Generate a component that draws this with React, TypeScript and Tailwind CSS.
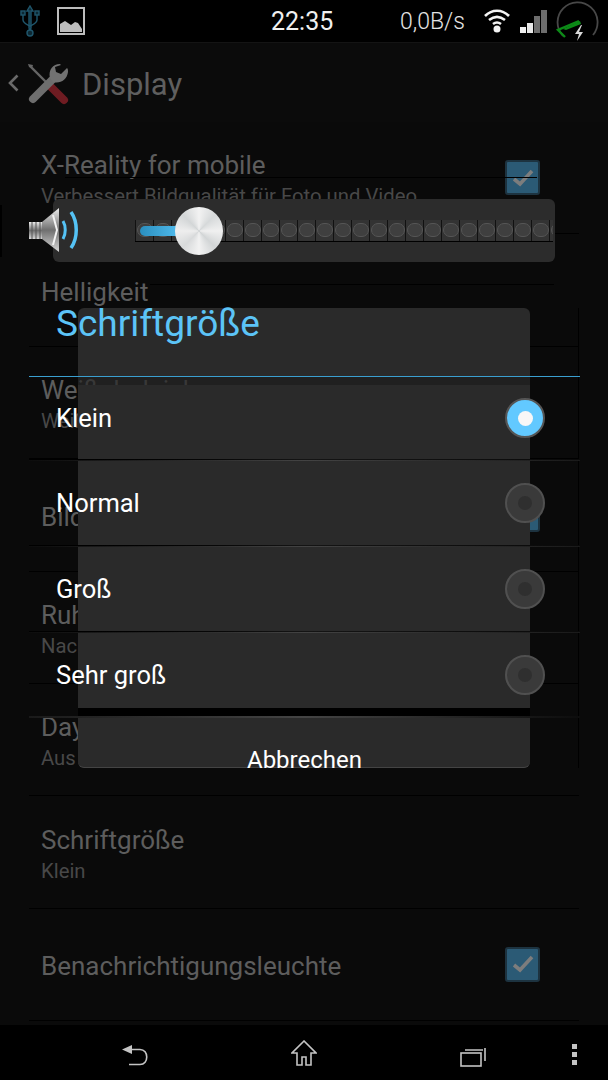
const rows = [
  { title: "X-Reality for mobile", sub: "Verbessert Bildqualität für Foto und Video", check: true },
  { title: "Helligkeit" },
  { title: "Weißabgleich", sub: "Weiß" },
  { title: "Bildschirm drehen", check: true },
  { title: "Ruhezustand", sub: "Nach 2 Minuten Inaktivität" },
  { title: "Daydream", sub: "Aus" },
  { title: "Schriftgröße", sub: "Klein" },
  { title: "Benachrichtigungsleuchte", check: true },
];

const options = ["Klein", "Normal", "Groß", "Sehr groß"];
const cells = Array.from({ length: 24 }, (_, i) => i);

function Checkbox() {
  return (
    <div className="flex h-[35px] w-[35px] items-center justify-center rounded-[3px] border-2 border-[#1d3340] bg-[#2b5a75]">
      <svg width="24" height="24" viewBox="0 0 24 24" fill="none" stroke="#7d7d7d" strokeWidth="3.6">
        <path d="M3 13l6 5L21 5" />
      </svg>
    </div>
  );
}

function Radio({ on }: { on: boolean }) {
  if (on) {
    return (
      <div className="flex h-[40px] w-[40px] items-center justify-center rounded-full border-2 border-[#555555] bg-[#62c9ff]">
        <div className="h-[15px] w-[15px] rounded-full bg-[#f7f7f7]" />
      </div>
    );
  }
  return (
    <div className="flex h-[40px] w-[40px] items-center justify-center rounded-full border-2 border-[#505050] bg-[#3a3a3a]">
      <div className="h-[14px] w-[14px] rounded-full bg-[#2f2f2f]" />
    </div>
  );
}

function Divider() {
  return (
    <div>
      <div className="h-px bg-gradient-to-r from-black via-[#141414] to-[#0a0a0a]" />
      <div className="h-px bg-gradient-to-r from-[#0d0d0d] via-[#434343] to-[#1a1a1a]" />
    </div>
  );
}

function StatusBar() {
  return (
    <div className="flex h-[42px] items-center bg-black text-[#f0f0f0]">
      {/* usb */}
      <svg className="ml-[20px]" width="20" height="32" viewBox="0 0 20 32" fill="none" stroke="#1f566c" strokeWidth="1.4">
        <path d="M10 1l3 5h-2v17l-1 3-1-3V6H7z" fill="#0d2833" />
        <path d="M3 9v6c0 3 3 4 7 6 4-2 7-3 7-6V9" />
        <rect x="1" y="6" width="4" height="4" fill="#0d2833" />
        <rect x="15" y="6" width="4" height="4" fill="#0d2833" />
        <circle cx="10" cy="28" r="3" fill="#0d2833" />
      </svg>
      {/* picture */}
      <svg className="ml-[17px]" width="28" height="28" viewBox="0 0 28 28">
        <rect x="1" y="1" width="26" height="26" fill="none" stroke="#bdbdbd" strokeWidth="2" />
        <path d="M3 25V17l5-3 3 2 3 2 4-3 3 1 4 6v3z" fill="#bdbdbd" />
      </svg>
      <span className="ml-[186px] w-[66px] text-[25px] leading-none">22:35</span>
      <span className="ml-[63px] w-[66px] text-[23px] leading-none font-light text-[#e4e4e4]">0,0B/s</span>
      {/* wifi */}
      <svg className="ml-[18px]" width="26" height="26" viewBox="0 0 26 26" fill="none" stroke="#f4f4f4" strokeWidth="2.6">
        <path d="M1 8c7-7 17-7 24 0" />
        <path d="M5 12c5-4 11-4 16 0" />
        <path d="M9 16c2.600-2 5.400-2 8 0" />
        <circle cx="13" cy="21" r="3.500" fill="#f4f4f4" stroke="none" />
      </svg>
      {/* signal */}
      <div className="ml-[10px] flex h-[23px] items-end gap-[1px]">
        <div className="h-[6px] w-[6px] bg-[#f0f0f0]" />
        <div className="h-[10px] w-[6px] bg-[#e8e8e8]" />
        <div className="h-[17px] w-[6px] bg-[#6d6d6d]" />
        <div className="h-[23px] w-[6px] bg-[#6d6d6d]" />
      </div>
      {/* gauge */}
      <svg className="ml-[8px]" width="44" height="42" viewBox="0 0 44 42" fill="none">
        <path d="M8 36A20 20 0 1 1 38 35" stroke="#484848" strokeWidth="1.800" />
        <path d="M10 37l-7-7 21-9" stroke="#0c8a17" strokeWidth="2.400" />
        <path d="M8 29l17-8 1 3-15 6z" fill="#0c8a17" />
        <path d="M26 25l-6 9h4l-2 7 6-9h-4l3-7z" fill="#d8d8d8" />
      </svg>
    </div>
  );
}

function ActionBar() {
  return (
    <div className="flex h-[80px] items-center border-t border-[#141414] bg-[#0b0b0b]">
      <svg className="ml-[8px]" width="11" height="18" viewBox="0 0 11 18" fill="none" stroke="#6a6a6a" strokeWidth="2.600">
        <path d="M9.500 1.500L2 9l7.500 7.500" />
      </svg>
      {/* wrench and screwdriver */}
      <svg className="ml-[8px] mt-[2px]" width="42" height="42" viewBox="0 0 42 42" fill="none">
        <path d="M3 3l20 20" stroke="#666666" strokeWidth="2.400" />
        <path d="M1 1l5 1-1 3-3-1z" fill="#666666" />
        <path d="M24 24l13 13" stroke="#6f1c22" strokeWidth="8" strokeLinecap="round" />
        <path d="M6 36L25 17" stroke="#6e6e6e" strokeWidth="8" strokeLinecap="round" />
        <path d="M33 1c-7 0-12 6-10 14l3 4c7 2 14-2 15-10 0-2 0-3-1-4l-6 6-5-2-1-5 6-2c-1-1-1-1-1-1z" fill="#727272" />
      </svg>
      <span className="ml-[13px] mt-[3px] text-[31px] leading-none text-[#5f5f5f]">Display</span>
    </div>
  );
}

function BackgroundList() {
  return (
    <div className="mx-[29px]">
      {rows.map((row) => (
        <div key={row.title} className="flex h-[112.4px] items-center justify-between border-b border-black pr-[39px] pl-[12px]">
          <div className="flex flex-col gap-[7px] pt-[4px] whitespace-nowrap">
            <span className="text-[26px] leading-[26px] text-[#5d5d5d]">{row.title}</span>
            {row.sub && <span className="text-[20.300px] leading-[22px] text-[#484848]">{row.sub}</span>}
          </div>
          {row.check && <Checkbox />}
        </div>
      ))}
    </div>
  );
}

function VolumePanel() {
  return (
    <div className="absolute top-[199px] left-[53px] flex h-[63px] w-[502px] items-center rounded-md bg-[#2c2c2c] pl-[82px]">
      {/* speaker */}
      <svg className="absolute top-[8px] -left-[25px]" width="54" height="46" viewBox="0 0 54 46" fill="none">
        <defs>
          <linearGradient id="cone" x1="0" y1="0" x2="0" y2="1">
            <stop offset="0" stopColor="#eeeeee" />
            <stop offset="0.5" stopColor="#6f6f6f" />
            <stop offset="1" stopColor="#d8d8d8" />
          </linearGradient>
        </defs>
        <rect x="1" y="15" width="14" height="17" fill="url(#cone)" />
        <path d="M4 15v17M8 15v17M12 15v17" stroke="#555555" strokeWidth="1" />
        <path d="M14 15L31 1v44L14 32z" fill="url(#cone)" />
        <path d="M25 8l4 15-4 15" stroke="#f2f2f2" strokeWidth="2" />
        <path d="M35 14c3 5 3 13 0 18" stroke="#55c3f5" strokeWidth="3" />
        <path d="M43 5c7 10 7 26 0 36" stroke="#55c3f5" strokeWidth="3.500" />
      </svg>
      {/* slider */}
      <div className="flex h-[22px] w-[418px] overflow-hidden border-b border-black">
        {cells.map((i) => (
          <div key={i} className="flex h-full w-[18px] shrink-0 items-center border-l border-[#111111] bg-[#333333] pl-[1px]">
            <div className="h-[14px] w-[16px] rounded-full border border-[#555555] bg-[#3f3f3f]" />
          </div>
        ))}
      </div>
      <div className="absolute top-[27px] left-[87px] h-[10px] w-[50px] rounded-l-full bg-gradient-to-r from-[#2a8fbf] to-[#5ac8fa]" />
      <div className="absolute top-[8px] left-[122px] h-[48px] w-[48px] rounded-full bg-[conic-gradient(#f2f2f2,#d6d9da,#f0f0f0,#d2d5d6,#f2f2f2,#d8dadb,#eeeeee,#d3d6d7,#f2f2f2)]" />
    </div>
  );
}

function FontDialog() {
  return (
    <div className="absolute top-[308px] left-[29px] h-[460px] w-[551px]">
      {/* panel behind the wider content */}
      <div className="absolute inset-y-0 left-[49px] flex w-[452px] flex-col">
        <div className="h-[69px] rounded-t-md bg-[#2a2a2a]" />
        <div className="h-[8px] bg-[#2a2a2a]/70" />
        <div className="flex-1 rounded-b-md border-b border-[#444444] bg-[#2a2a2a]" />
      </div>

      <div className="relative flex h-full flex-col">
        <div className="h-[68px] pl-[27px] text-[37px] leading-[32px] text-[#5cc4f7]">Schriftgröße</div>
        <div className="h-px bg-[#3a9fd0]" />
        {options.map((opt, i) => (
          <div key={opt}>
            <div className={i === 0 ? "flex h-[82px] items-center justify-between pr-[35px] pl-[27px]" : i === 3 ? "flex h-[75px] items-center justify-between pt-[8px] pr-[35px] pl-[27px]" : "flex h-[84px] items-center justify-between pr-[35px] pl-[27px]"}>
              <span className="mt-[2px] text-[25.500px] leading-none text-white">{opt}</span>
              <Radio on={i === 0} />
            </div>
            {i < 3 && <Divider />}
          </div>
        ))}
        <div className="ml-[49px] h-[8px] w-[452px] bg-black" />
        <div className="h-[2px] bg-gradient-to-r from-[#1a1a1a] via-[#444444] to-[#0d0d0d]" />
        <div className="h-[50px] pt-[30px] text-center text-[24px] leading-[24px] text-white">Abbrechen</div>
      </div>
    </div>
  );
}

function NavBar() {
  return (
    <div className="absolute bottom-0 left-0 flex h-[55px] w-full items-center bg-black pl-[122px]">
      <svg className="mt-[6px]" width="26" height="22" viewBox="0 0 26 22" fill="none" stroke="#c4c4c4" strokeWidth="1.600">
        <path d="M0 4.500L10 0v9z" fill="#c4c4c4" stroke="none" />
        <path d="M9 4.500h9c9 0 9 15 0 15H7" />
      </svg>
      <svg className="ml-[143px]" width="26" height="26" viewBox="0 0 26 26" fill="none" stroke="#c4c4c4" strokeWidth="1.600">
        <path d="M13 1L1 13h5v12h5v-8h4v8h5V13h5z" />
      </svg>
      <svg className="ml-[143px] mt-[8px]" width="26" height="20" viewBox="0 0 26 20" fill="none" stroke="#c4c4c4" strokeWidth="1.600">
        <rect x="1" y="6" width="20" height="13" />
        <path d="M5 3h18M25 1v13" />
      </svg>
      <div className="ml-[86px] mt-[3px] flex flex-col gap-[3px]">
        <div className="h-[5px] w-[5px] bg-[#c4c4c4]" />
        <div className="h-[5px] w-[5px] bg-[#c4c4c4]" />
        <div className="h-[5px] w-[5px] bg-[#c4c4c4]" />
      </div>
    </div>
  );
}

export default function App() {
  return (
    <div className="relative h-[1080px] w-[608px] overflow-hidden bg-[#0a0a0a] font-['Roboto',sans-serif]">
      <StatusBar />
      <ActionBar />
      <BackgroundList />

      {/* stray black lines left on screen by the redraw */}
      <div className="absolute top-[177px] left-[65px] h-px w-[472px] bg-black" />
      <div className="absolute top-[284px] left-[150px] h-px w-[404px] bg-black" />
      <div className="absolute top-[308px] left-[578px] h-[460px] w-px bg-black" />
      <div className="absolute top-[205px] left-0 h-[52px] w-[2px] bg-black" />

      <VolumePanel />
      <FontDialog />
      <NavBar />
    </div>
  );
}
